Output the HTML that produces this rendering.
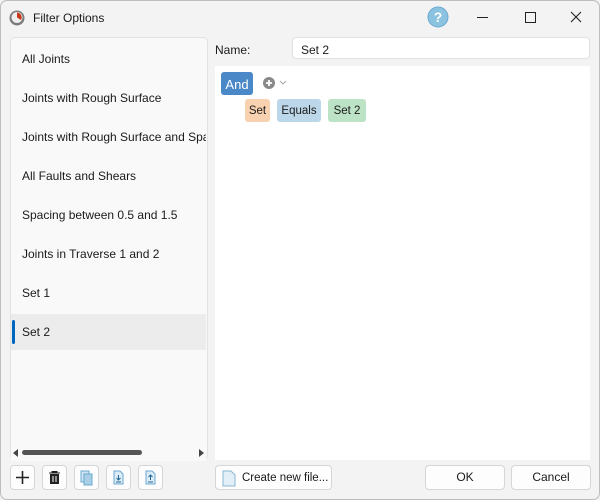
<html><head><style>
body{margin:0;width:600px;height:500px;background:#f3f3f3;font-family:"Liberation Sans",sans-serif;font-size:12px;color:#1a1a1a;position:relative;overflow:hidden}
.a{position:absolute}
.win{left:0;top:0;width:598px;height:498px;border:1px solid #bdbdbd;border-radius:7px}
.list{left:10px;top:37px;width:196px;height:421px;background:#f9f9f9;border:1px solid #e2e2e2;border-radius:5px}
.it{position:absolute;left:12px;font-size:12px;white-space:nowrap}
.btn{position:absolute;top:465px;height:25px;background:#fdfdfd;border:1px solid #d6d6d6;border-radius:4px;box-sizing:border-box}
.tag{position:absolute;height:23px;line-height:25px;border-radius:3px;font-size:12px;text-align:center}
</style></head><body>
<div class="a win"></div>
<svg class="a" style="left:8px;top:9px" width="18" height="18" viewBox="0 0 18 18"><circle cx="9" cy="9" r="7.5" fill="#7a7a7a"/><circle cx="9" cy="8.5" r="5.5" fill="#eee"/><path d="M9 3.5a5 5 0 0 1 4 7.5L9 8.5z" fill="#c8391a"/></svg>
<div class="a" style="left:33px;top:11px;font-size:12px">Filter Options</div>
<svg class="a" style="left:427px;top:6px" width="22" height="22"><circle cx="11" cy="11" r="10" fill="#8cc3e0" stroke="#6aa9cf"/><text x="11" y="16" text-anchor="middle" fill="#fff" font-weight="bold" font-size="14" font-family="Liberation Sans">?</text></svg>
<div class="a" style="left:477px;top:17px;width:11px;height:1px;background:#222"></div>
<div class="a" style="left:525px;top:12px;width:9px;height:9px;border:1px solid #222"></div>
<svg class="a" style="left:570px;top:11px" width="12" height="12"><path d="M1 1L11 11M11 1L1 11" stroke="#222" stroke-width="1.1"/></svg>
<div class="a list"></div>
<div class="a" style="left:11px;top:314px;width:195px;height:36px;background:#ececec"></div>
<div class="a" style="left:12px;top:320px;width:3px;height:24px;background:#0067c0;border-radius:2px"></div>
<div class="a" style="left:10px;top:37px;width:196px;height:400px;overflow:hidden">
<div class="it" style="top:15px">All Joints</div>
<div class="it" style="top:54px">Joints with Rough Surface</div>
<div class="it" style="top:93px">Joints with Rough Surface and Spacing</div>
<div class="it" style="top:132px">All Faults and Shears</div>
<div class="it" style="top:171px">Spacing between 0.5 and 1.5</div>
<div class="it" style="top:210px">Joints in Traverse 1 and 2</div>
<div class="it" style="top:249px">Set 1</div>
<div class="it" style="top:288px">Set 2</div>
</div>
<div class="a" style="left:11px;top:445px;width:195px;height:16px;background:#f9f9f9"></div>
<div class="a" style="left:13px;top:449px;border-right:5px solid #444;border-top:4px solid transparent;border-bottom:4px solid transparent"></div>
<div class="a" style="left:22px;top:450px;width:120px;height:5px;background:#555;border-radius:3px"></div>
<div class="a" style="left:199px;top:449px;border-left:5px solid #444;border-top:4px solid transparent;border-bottom:4px solid transparent"></div>
<div class="a" style="left:215px;top:43px">Name:</div>
<div class="a" style="left:292px;top:37px;width:298px;height:22px;background:#fff;border:1px solid #e0e0e0;border-radius:4px;box-sizing:border-box;padding:5px 8px">Set 2</div>
<div class="a" style="left:215px;top:66px;width:375px;height:394px;background:#fff"></div>
<div class="tag" style="left:221px;top:72px;width:32px;background:#4a88c7;color:#fff;font-size:13px">And</div>
<svg class="a" style="left:262px;top:76px" width="26" height="14"><circle cx="7" cy="7" r="6" fill="#8a8a8a"/><path d="M7 4v6M4 7h6" stroke="#fff" stroke-width="1.8"/><path d="M18 5l3 3 3-3" stroke="#aaa" fill="none"/></svg>
<div class="tag" style="left:245px;top:99px;width:25px;background:#f8d2b0;font-size:11.5px">Set</div>
<div class="tag" style="left:277px;top:99px;width:44px;background:#bcd7ea;font-size:11.5px">Equals</div>
<div class="tag" style="left:328px;top:99px;width:38px;background:#bde3c6;font-size:11.5px">Set 2</div>
<div class="btn" style="left:10px;width:25px"><svg width="23" height="23"><path d="M11.5 5v13M5 11.5h13" stroke="#222" stroke-width="1.6"/></svg></div>
<div class="btn" style="left:42px;width:25px"><svg width="23" height="23"><path d="M6 7h11M9 7V5.5h5V7M7.5 8.5h8v9h-8z" fill="#222" stroke="#222"/><path d="M10 10v6M13 10v6" stroke="#fff"/></svg></div>
<div class="btn" style="left:74px;width:25px"><svg width="23" height="23"><rect x="6" y="5" width="8" height="11" fill="#cfe4f2" stroke="#6aa9cf"/><rect x="9" y="8" width="8" height="11" fill="#a8cfe6" stroke="#6aa9cf"/></svg></div>
<div class="btn" style="left:106px;width:25px"><svg width="23" height="23"><path d="M7 5h6l3 3v10H7z" fill="#dcecf6" stroke="#6aa9cf"/><path d="M11.5 9v5M9.5 12l2 2 2-2M9 16h5" stroke="#256a96" fill="none"/></svg></div>
<div class="btn" style="left:138px;width:25px"><svg width="23" height="23"><path d="M7 5h6l3 3v10H7z" fill="#dcecf6" stroke="#6aa9cf"/><path d="M11.5 14V9M9.5 11l2-2 2 2M9 16h5" stroke="#256a96" fill="none"/></svg></div>
<div class="btn" style="left:215px;width:117px"><svg class="a" style="left:6px;top:4px" width="14" height="17"><path d="M1 1h8l4 4v11H1z" fill="#e3eff7" stroke="#8ab6d3"/></svg><span class="a" style="left:26px;top:6px;white-space:nowrap;font-size:11.5px">Create new file...</span></div>
<div class="btn" style="left:425px;width:80px;text-align:center;line-height:23px">OK</div>
<div class="btn" style="left:511px;width:80px;text-align:center;line-height:23px">Cancel</div>
</body></html>
